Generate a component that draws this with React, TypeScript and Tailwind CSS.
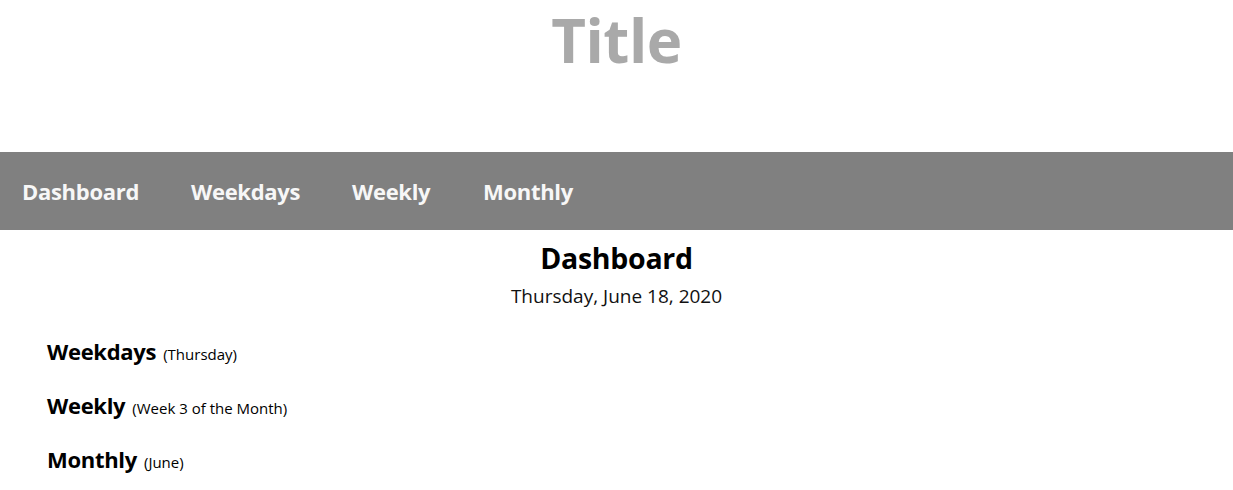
import React from "react";

export default function App() {
  const rows: [string, string][] = [
    ["Weekdays", "(Thursday)"],
    ["Weekly", "(Week 3 of the Month)"],
    ["Monthly", "(June)"],
  ];
  return (
    <div className="bg-white w-[1233px] h-[490px] overflow-hidden font-['Open_Sans','Noto_Sans',sans-serif]">
      <header className="h-[152px] flex justify-center">
        <h1 className="text-[60px] leading-[80px] font-bold text-[#a9a9a9] tracking-[-0.5px]">Title</h1>
      </header>
      <nav className="h-[78px] bg-[#808080] flex items-center pl-[22px] text-[22px] font-bold text-[#f7f7f7] tracking-[-0.3px]">
        <a className="w-[169px]">Dashboard</a>
        <a className="w-[161px]">Weekdays</a>
        <a className="w-[131px]">Weekly</a>
        <a>Monthly</a>
      </nav>
      <main className="flex flex-col">
        <h2 className="text-center text-[28.5px] font-bold text-black leading-[40px] mt-[8px] tracking-[-0.3px]">Dashboard</h2>
        <p className="text-center text-[19px] text-[#111] leading-[24px] mt-[6px]">Thursday, June 18, 2020</p>
        <div className="pl-[47px] mt-[28px] flex flex-col gap-[24px]">
          {rows.map(([a, b]) => (
            <div key={a} className="h-[30px] flex items-baseline gap-[7px] text-black">
              <span className="text-[22px] leading-[30px] font-bold tracking-[-0.3px]">{a}</span>
              <span className="text-[15px] leading-[30px]">{b}</span>
            </div>
          ))}
        </div>
      </main>
    </div>
  );
}
